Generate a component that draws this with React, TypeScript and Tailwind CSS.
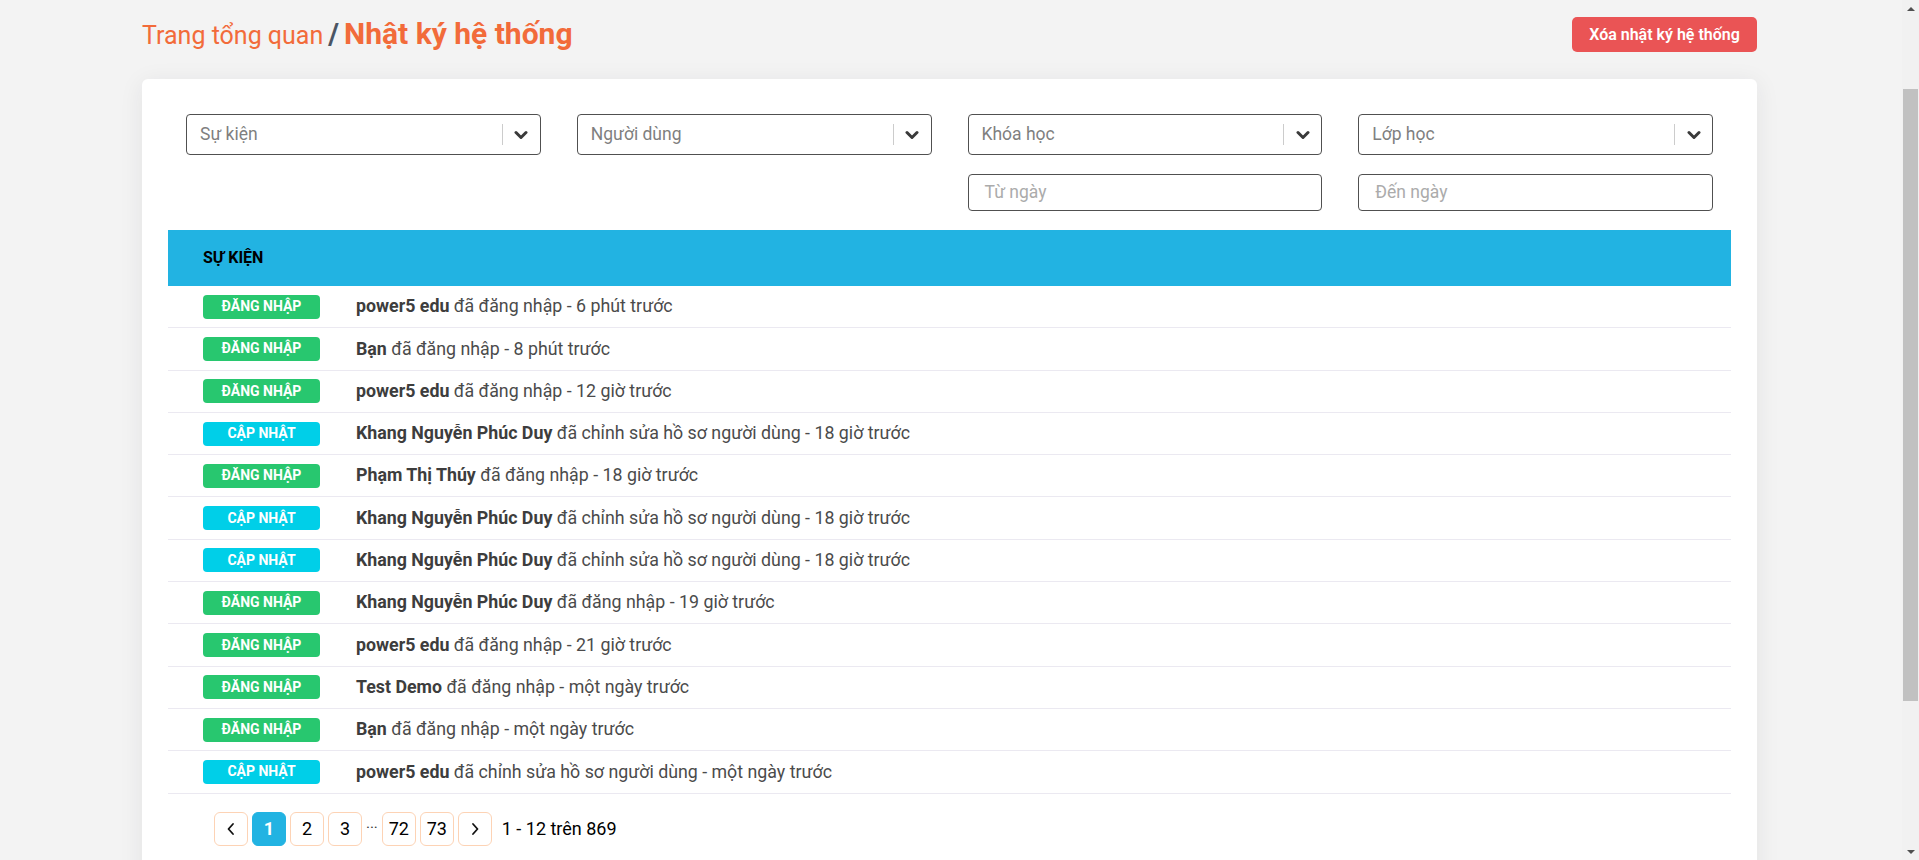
import * as React from "react";

type Kind = "login" | "update";

interface LogRow {
  kind: Kind;
  who: string;
  action: string;
  when: string;
}

const rows: LogRow[] = [
  { kind: "login", who: "power5 edu", action: "đã đăng nhập", when: "6 phút trước" },
  { kind: "login", who: "Bạn", action: "đã đăng nhập", when: "8 phút trước" },
  { kind: "login", who: "power5 edu", action: "đã đăng nhập", when: "12 giờ trước" },
  { kind: "update", who: "Khang Nguyễn Phúc Duy", action: "đã chỉnh sửa hồ sơ người dùng", when: "18 giờ trước" },
  { kind: "login", who: "Phạm Thị Thúy", action: "đã đăng nhập", when: "18 giờ trước" },
  { kind: "update", who: "Khang Nguyễn Phúc Duy", action: "đã chỉnh sửa hồ sơ người dùng", when: "18 giờ trước" },
  { kind: "update", who: "Khang Nguyễn Phúc Duy", action: "đã chỉnh sửa hồ sơ người dùng", when: "18 giờ trước" },
  { kind: "login", who: "Khang Nguyễn Phúc Duy", action: "đã đăng nhập", when: "19 giờ trước" },
  { kind: "login", who: "power5 edu", action: "đã đăng nhập", when: "21 giờ trước" },
  { kind: "login", who: "Test Demo", action: "đã đăng nhập", when: "một ngày trước" },
  { kind: "login", who: "Bạn", action: "đã đăng nhập", when: "một ngày trước" },
  { kind: "update", who: "power5 edu", action: "đã chỉnh sửa hồ sơ người dùng", when: "một ngày trước" },
];

function ChevronDown() {
  return (
    <svg width="14" height="10" viewBox="0 0 14 10" aria-hidden="true">
      <polyline
        points="2,2.5 7,7.5 12,2.5"
        fill="none"
        stroke="#3a3a3a"
        strokeWidth="3"
        strokeLinecap="round"
        strokeLinejoin="round"
      />
    </svg>
  );
}

function SelectBox({ label }: { label: string }) {
  return (
    <div className="flex h-[41px] items-center rounded-[4px] border border-[#505050] bg-white pl-[13px]">
      <span className="flex-1 text-[17.5px] text-[#7f7f7f]">{label}</span>
      <span className="h-[21px] w-px bg-[#cccccc]" />
      <span className="flex w-[37px] items-center justify-center">
        <ChevronDown />
      </span>
    </div>
  );
}

function DateBox({ label }: { label: string }) {
  return (
    <div className="flex h-[37px] items-center rounded-[4px] border border-[#505050] bg-white pl-[16px] text-[17.5px] text-[#ababab]">
      {label}
    </div>
  );
}

function Badge({ kind }: { kind: Kind }) {
  const isLogin = kind === "login";
  return (
    <span
      className={`flex h-[24px] w-[117px] shrink-0 items-center justify-center rounded-[4px] text-[14px] font-bold uppercase text-white ${
        isLogin ? "bg-[#28c76f]" : "bg-[#00cfe8]"
      }`}
    >
      {isLogin ? "Đăng nhập" : "Cập nhật"}
    </span>
  );
}

function PageButton({
  children,
  active = false,
}: {
  children: React.ReactNode;
  active?: boolean;
}) {
  return (
    <span
      className={`flex h-[34px] w-[34px] items-center justify-center rounded-[6px] border text-[18px] ${
        active
          ? "border-[#22b3e2] bg-[#22b3e2] font-bold text-white"
          : "border-[#fdd3b5] bg-white text-black"
      }`}
    >
      {children}
    </span>
  );
}

function Arrow({ dir }: { dir: "left" | "right" }) {
  return (
    <svg width="10" height="14" viewBox="0 0 10 14" aria-hidden="true">
      <polyline
        points={dir === "left" ? "7,2 2.5,7 7,12" : "3,2 7.5,7 3,12"}
        fill="none"
        stroke="#111"
        strokeWidth="1.8"
        strokeLinecap="round"
        strokeLinejoin="round"
      />
    </svg>
  );
}

// Classic-style window scrollbar seen at the right edge of the capture.
function Scrollbar() {
  return (
    <div className="flex w-[17px] shrink-0 flex-col bg-[#f1f1f1]">
      <div className="flex h-[17px] items-center justify-center">
        <span className="h-0 w-0 border-x-[4px] border-b-[4px] border-x-transparent border-b-[#505050]" />
      </div>
      <div className="h-[72px]" />
      <div className="mx-[1px] h-[612px] bg-[#c1c1c1]" />
      <div className="flex-1" />
      <div className="flex h-[17px] items-center justify-center">
        <span className="h-0 w-0 border-x-[4px] border-t-[4px] border-x-transparent border-t-[#505050]" />
      </div>
    </div>
  );
}

export default function App() {
  return (
    <div className="flex h-[860px] w-full overflow-hidden bg-[#f3f3f3] font-['Roboto','Noto_Sans',sans-serif]">
      <main className="min-w-0 flex-1 pl-[142px] pr-[145px]">
        {/* Breadcrumb + action */}
        <header className="flex h-[52px] items-center justify-between pt-[17px]">
          <h1 className="flex items-baseline leading-[35px]">
            <span className="text-[25px] text-[#f26b3a]">Trang tổng quan</span>
            <span className="mx-[5px] text-[29px] font-bold text-[#4b5563]">/</span>
            <span className="text-[30px] font-bold text-[#f26b3a]">Nhật ký hệ thống</span>
          </h1>
          <button className="h-[35px] w-[185px] rounded-[5px] bg-[#ea5455] text-[16px] font-semibold text-white">
            Xóa nhật ký hệ thống
          </button>
        </header>

        {/* Card */}
        <section className="mt-[27px] rounded-[6px] bg-white px-[26px] pb-[60px] pt-[35px] shadow-[0_4px_24px_0_rgba(34,41,47,0.08)]">
          <div className="grid grid-cols-4 gap-x-[36px] gap-y-[19px] px-[18px]">
            <SelectBox label="Sự kiện" />
            <SelectBox label="Người dùng" />
            <SelectBox label="Khóa học" />
            <SelectBox label="Lớp học" />
            <div className="col-start-3">
              <DateBox label="Từ ngày" />
            </div>
            <DateBox label="Đến ngày" />
          </div>

          <div className="mt-[19px]">
            <div className="flex h-[56px] items-center bg-[#22b3e2] pl-[35px] text-[16px] font-bold uppercase text-black">
              Sự kiện
            </div>
            {rows.map((r, i) => (
              <div
                key={i}
                className="flex h-[42.3px] items-center gap-[36px] border-b border-[#ebe9f1] pl-[35px] text-[17.8px] text-[#4b4b4b]"
              >
                <Badge kind={r.kind} />
                <span>
                  <b className="font-bold text-[#3d3d3d]">{r.who}</b> {r.action} - {r.when}
                </span>
              </div>
            ))}
          </div>

          {/* Pagination */}
          <div className="flex items-center gap-[4px] pl-[46px] pt-[18px]">
            <PageButton>
              <Arrow dir="left" />
            </PageButton>
            <PageButton active>1</PageButton>
            <PageButton>2</PageButton>
            <PageButton>3</PageButton>
            <span className="text-[15px] leading-none text-[#333]">···</span>
            <PageButton>72</PageButton>
            <PageButton>73</PageButton>
            <PageButton>
              <Arrow dir="right" />
            </PageButton>
            <span className="ml-[6px] text-[18px] text-black">1 - 12 trên 869</span>
          </div>
        </section>
      </main>
      <Scrollbar />
    </div>
  );
}
